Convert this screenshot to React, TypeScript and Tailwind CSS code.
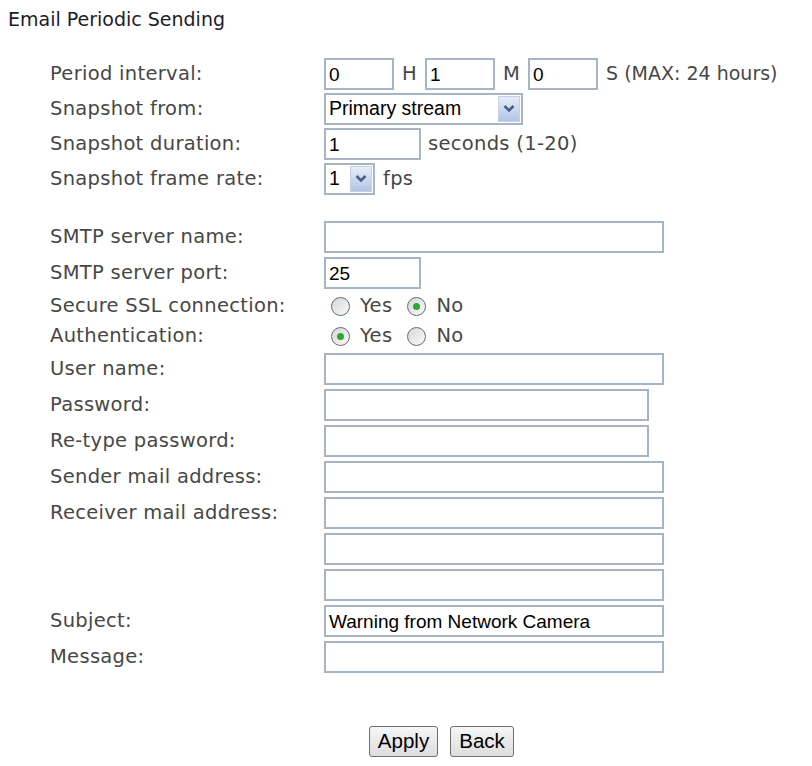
import React from "react";

const labelFont = { fontFamily: '"DejaVu Sans", Verdana, sans-serif' };
const inputFont = { fontFamily: '"Liberation Sans", Arial, sans-serif' };

type TextBoxProps = { width: string; value?: string };

const TextBox: React.FC<TextBoxProps> = ({ width, value = "" }) => (
  <div
    className={`${width} h-[32px] border-2 border-[#a6b4c6] bg-white flex items-center pl-[3px] pt-[1px] text-[19px] tracking-normal text-black leading-none`}
    style={inputFont}
  >
    {value}
  </div>
);

const Chevron = () => (
  <svg width="12" height="9" viewBox="0 0 12 9">
    <path d="M1.5 2 L6 6.5 L10.5 2" fill="none" stroke="#4b5f86" strokeWidth="2.6" />
  </svg>
);

type DropProps = { width: string; value: string };

const DropBox: React.FC<DropProps> = ({ width, value }) => (
  <div
    className={`${width} h-[32px] border-2 border-[#a6b4c6] bg-white flex items-center justify-between pl-[3px] pr-[1px] text-[19.5px] tracking-normal text-black`}
    style={inputFont}
  >
    <span className="leading-none">{value}</span>
    <span className="w-[22px] h-[26px] flex items-center justify-center bg-gradient-to-b from-[#e6edf9] to-[#b2c4e5] border border-[#c3d0e6]">
      <Chevron />
    </span>
  </div>
);

const Radio: React.FC<{ checked?: boolean; label: string }> = ({ checked, label }) => (
  <span className="flex items-center">
    <span className="w-[19px] h-[19px] rounded-full border-[1.5px] border-[#5e6d7c] bg-gradient-to-br from-[#d6d6d6] to-[#fbfbfb] flex items-center justify-center">
      {checked && <span className="w-[7px] h-[7px] rounded-full bg-[#31a634]" />}
    </span>
    <span className="ml-[10px] mr-[15px]">{label}</span>
  </span>
);

const Row: React.FC<{ label?: string; h?: string; children?: React.ReactNode }> = ({
  label,
  h = "h-[36px]",
  children,
}) => (
  <div className={`flex items-center ${h}`}>
    <div className="w-[274px] shrink-0 whitespace-nowrap">{label}</div>
    <div className="flex items-center whitespace-nowrap">{children}</div>
  </div>
);

const Unit: React.FC<{ children: React.ReactNode; className?: string }> = ({ children, className = "" }) => (
  <span className={`mx-[8px] ${className}`}>{children}</span>
);

export default function App() {
  return (
    <div className="w-[812px] h-[766px] bg-white overflow-hidden">
      <div className="pt-[8px] pl-[8px] text-[19px] leading-[23px] text-[#1c1c2a]" style={labelFont}>
        Email Periodic Sending
      </div>

      <div className="pl-[50px] mt-[25px] text-[19.5px] tracking-[0.3px] text-[#474747]" style={labelFont}>
        <Row label="Period interval:" h="h-[35px]">
          <TextBox width="w-[70px]" value="0" />
          <Unit className="mx-[7px]">H</Unit>
          <TextBox width="w-[70px]" value="1" />
          <Unit>M</Unit>
          <TextBox width="w-[70px]" value="0" />
          <Unit className="tracking-normal text-[19px]">S (MAX: 24 hours)</Unit>
        </Row>
        <Row label="Snapshot from:" h="h-[35px]">
          <DropBox width="w-[199px]" value="Primary stream" />
        </Row>
        <Row label="Snapshot duration:" h="h-[35px]">
          <TextBox width="w-[97px]" value="1" />
          <Unit className="ml-[7px]">seconds (1-20)</Unit>
        </Row>
        <Row label="Snapshot frame rate:" h="h-[35px]">
          <DropBox width="w-[51px]" value="1" />
          <Unit>fps</Unit>
        </Row>

        <div className="h-[23px]" />

        <Row label="SMTP server name:">
          <TextBox width="w-[340px]" />
        </Row>
        <Row label="SMTP server port:">
          <TextBox width="w-[97px]" value="25" />
        </Row>
        <Row label="Secure SSL connection:" h="h-[30px]">
          <div className="flex items-center pl-[7px]">
            <Radio label="Yes" />
            <Radio checked label="No" />
          </div>
        </Row>
        <Row label="Authentication:" h="h-[30px]">
          <div className="flex items-center pl-[7px]">
            <Radio checked label="Yes" />
            <Radio label="No" />
          </div>
        </Row>
        <Row label="User name:">
          <TextBox width="w-[340px]" />
        </Row>
        <Row label="Password:">
          <TextBox width="w-[325px]" />
        </Row>
        <Row label="Re-type password:">
          <TextBox width="w-[325px]" />
        </Row>
        <Row label="Sender mail address:">
          <TextBox width="w-[340px]" />
        </Row>
        <Row label="Receiver mail address:">
          <TextBox width="w-[340px]" />
        </Row>
        <Row>
          <TextBox width="w-[340px]" />
        </Row>
        <Row>
          <TextBox width="w-[340px]" />
        </Row>
        <Row label="Subject:">
          <TextBox width="w-[340px]" value="Warning from Network Camera" />
        </Row>
        <Row label="Message:">
          <TextBox width="w-[340px]" />
        </Row>
      </div>

      <div className="flex gap-[12px] pl-[369px] mt-[51px]" style={inputFont}>
        <button className="w-[69px] h-[31px] rounded-[3px] border border-[#6f6f6f] bg-gradient-to-b from-[#f6f6f6] to-[#dddddd] text-[20.5px] text-black leading-none">
          Apply
        </button>
        <button className="w-[64px] h-[31px] rounded-[3px] border border-[#6f6f6f] bg-gradient-to-b from-[#f6f6f6] to-[#dddddd] text-[20.5px] text-black leading-none">
          Back
        </button>
      </div>
    </div>
  );
}
